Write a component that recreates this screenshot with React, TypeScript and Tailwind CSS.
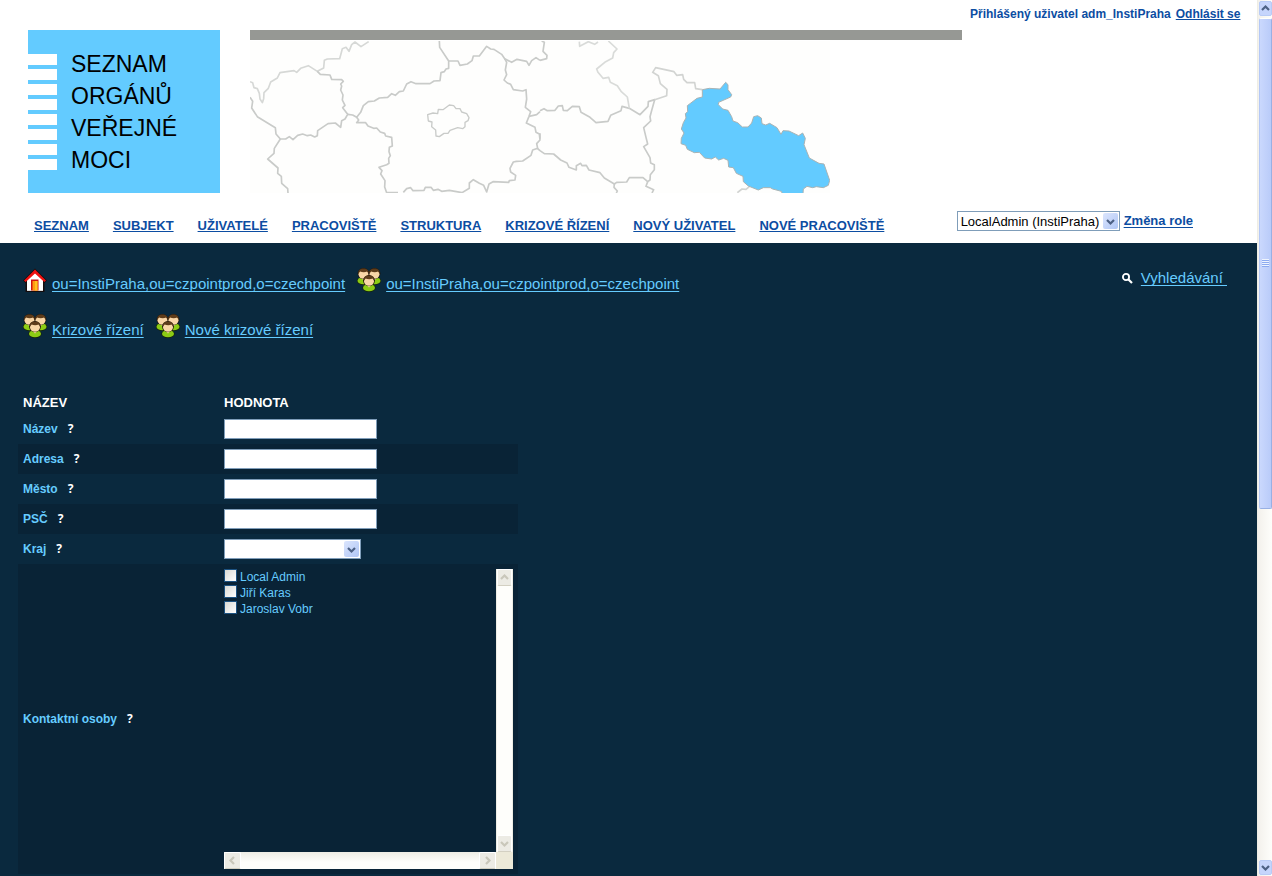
import React, { useState } from 'react';
import { clsx } from 'clsx';

const navItems = [
  'SEZNAM',
  'SUBJEKT',
  'UŽIVATELÉ',
  'PRACOVIŠTĚ',
  'STRUKTURA',
  'KRIZOVÉ ŘÍZENÍ',
  'NOVÝ UŽIVATEL',
  'NOVÉ PRACOVIŠTĚ',
];

const textFields = [
  { id: 'nazev', label: 'Název' },
  { id: 'adresa', label: 'Adresa' },
  { id: 'mesto', label: 'Město' },
  { id: 'psc', label: 'PSČ' },
];

const contacts = ['Local Admin', 'Jiří Karas', 'Jaroslav Vobr'];

export default function App() {
  return (
    <div className="flex h-screen overflow-hidden bg-white font-['Liberation_Sans',Arial,sans-serif]">
      <div className="flex min-w-0 flex-1 flex-col overflow-hidden">
        <Header />
        <main className="flex-1 bg-[#0a293e] px-[18px] pt-[25px] text-[#66ccff]">
          <Breadcrumbs />
          <ContactForm />
        </main>
      </div>
      <PageScrollbar />
    </div>
  );
}

function Header() {
  return (
    <header className="text-[#0c4da2]">
      <div className="flex items-start pl-7">
        <Logo />
        <div className="mt-[30px] ml-[30px] w-[712px] shrink-0">
          <div className="h-[10px] bg-[#969894]" />
          <RegionMap />
        </div>
        <div className="mt-[6px] ml-2 flex gap-[5px] text-xs leading-4 font-bold whitespace-nowrap">
          <span>Přihlášený uživatel adm_InstiPraha</span>
          <a href="#" className="underline underline-offset-1">
            Odhlásit se
          </a>
        </div>
      </div>
      <div className="flex h-[50px] items-start justify-between pt-[18px] pr-16 pl-[34px]">
        <nav className="flex gap-6 pt-[7px] text-[13px] leading-4 font-bold whitespace-nowrap">
          {navItems.map((item) => (
            <a key={item} href="#" className="underline underline-offset-1">
              {item}
            </a>
          ))}
        </nav>
        <div className="flex items-center gap-1">
          <XpSelect label="Role" className="w-[163px] text-[13px]" options={['LocalAdmin (InstiPraha)']} />
          <a href="#" className="text-[13px] leading-5 font-bold whitespace-nowrap underline underline-offset-2">
            Změna role
          </a>
        </div>
      </div>
    </header>
  );
}

function Logo() {
  return (
    <div className="mt-[30px] flex h-[163px] w-48 shrink-0 bg-[#63cbff]">
      {/* white stripes on the left edge */}
      <div className="flex w-[29px] flex-col gap-1 pt-6">
        {[0, 1, 2, 3, 4, 5, 6, 7].map((i) => (
          <div key={i} className="h-[11px] bg-white" />
        ))}
      </div>
      <div className="pt-[18px] pl-[14px] text-[23px] leading-8 text-black">
        SEZNAM
        <br />
        ORGÁNŮ
        <br />
        VEŘEJNÉ
        <br />
        MOCI
      </div>
    </div>
  );
}

function RegionMap() {
  return (
    <svg className="mt-px block h-[152px] w-[580px] bg-[#fefefd]" viewBox="0 0 1740 456" aria-hidden="true">
      <g fill="none" stroke="#c9cbc9" strokeWidth="5" strokeLinejoin="round">
        <g transform="translate(-30 -63)">
          <path
            stroke="#d6d8d6"
            d="M30 185L38 188L42 203L52 206L58 220L60 237L67 248L71 236L72 218L85 205L92 186L112 174L120 158L162 152L170 157L182 145L205 137L232 154L251 144L253 121L262 117L299 116L307 86L318 82L327 94L335 74L345 66L363 80L386 65"
          />
          <path d="M30 232L38 244L35 264L52 290L106 323L108 342L121 357L103 385L102 400L83 417L114 444L113 460L124 469L125 490L143 506L144 519" />
          <path d="M121 357L137 357L148 350L159 359L173 346L188 342L202 347L212 345L224 351L232 347L233 332L264 311L286 309L302 322L305 302L315 297L323 283L308 263L315 256L307 240L309 225L302 210L305 198L302 192L310 184L305 179L275 178L270 165L241 163L232 154" />
          <path d="M323 283L338 285L350 292L362 277L370 257L385 245L403 243L418 234L443 232L455 221L466 226L478 215L490 213L500 192L513 185L528 191L570 191L582 183L600 182L603 158L613 155L618 147L626 145L626 123L599 82L598 63" />
          <path d="M626 123L654 123L660 136L682 132L696 122L700 108L718 108L740 79L752 87L762 88L785 103L794 116L815 127L831 118L860 124L867 136L875 122L888 113L900 121" />
          <path d="M350 292L356 300L350 308L377 308L384 318L401 325L410 324L421 336L434 340L437 348L455 352L457 378L448 382L447 395L451 407L446 415L447 430L440 434L417 442L426 452L422 462L435 482L434 501L440 518L474 518" />
          <path d="M794 116L800 127L796 150L800 164L792 180L802 189L812 193L820 209L848 213L858 209L860 237L856 262L872 275L867 289L859 309L885 322L888 337L898 342L900 360L890 371L893 385L878 390L873 406L848 423L829 424L820 426L810 445L812 456L827 466L825 480L808 482L806 487L759 485L747 492L740 516L731 496L718 490L700 479L688 489L688 505L666 518L628 511L605 514L594 508L580 511L573 502L556 502L552 511L519 512L512 503L500 506L490 517" />
          <path d="M867 289L890 284L900 275" />
          <path
            strokeWidth="4"
            d="M563 284L579 279L593 281L595 268L609 269L628 255L641 257L648 266L660 266L665 276L680 281L687 293L684 302L675 307L675 320L668 326L653 323L630 331L624 340L612 340L598 350L588 348L587 330L575 320L576 306L565 303Z"
          />
        </g>
        <g transform="translate(870 -63)">
          <path d="M5 63L13 67L9 94L21 106L20 116L0 121M0 272L12 266L22 272L45 271L55 258L67 257L70 271L82 272L97 259L118 260L123 277L150 292L168 308L204 304L212 286L243 272L246 259L268 265L300 284L324 259L325 245L344 239L334 275L330 290L332 303L311 323L318 352L323 372L311 380L330 413L332 429L343 434L343 449L331 464L330 480L323 485L309 473L268 473L260 486L230 487L223 492L193 474L180 458L147 450L139 436L126 437L122 430L109 437L109 450L87 442L81 429L62 420L41 402L13 401L0 392L-8 385" />
          <path d="M223 492L222 502L232 513L229 519M323 485L318 499L341 509L336 519M0 340L0 356" />
          <path
            stroke="#d9dbd9"
            d="M118 65L119 79L145 65L164 73L174 66M205 63L231 87L221 98L218 114L197 125L170 147L174 157L189 175L206 172L211 187L232 197L244 215L262 231L268 265"
          />
          <path stroke="#d2d4d2" d="M344 239L380 227L381 208L361 191L355 167L338 157L347 143L402 155L410 166L428 164L431 178L441 188L464 188L467 206L487 209M628 500L618 508L606 507L592 518" />
          <path
            fill="#63cbff"
            stroke="#a9b3b4"
            strokeWidth="3"
            d="M487 209L508 205L540 207L557 187L564 194L564 209L575 224L572 231L536 247L535 254L548 267L564 271L575 290L579 303L593 308L607 321L624 321L635 309L641 290L653 287L664 294L666 311L677 315L689 310L711 323L723 343L729 332L747 333L776 347L788 339L796 355L792 374L808 414L837 430L852 432L869 481L865 496L850 503L829 500L818 503L801 499L790 507L789 521L727 521L724 514L698 507L691 503L670 503L655 510L625 498L610 485L609 469L589 460L580 443L566 441L564 421L551 415L536 420L526 411L515 417L494 414L478 397L463 398L442 388L437 376L423 371L424 355L432 339L424 327L430 308L438 294L436 281L443 275L442 257L471 235L487 231Z"
          />
        </g>
      </g>
    </svg>
  );
}

const crumbClass = 'underline underline-offset-2 [text-decoration-skip-ink:none]';

function Breadcrumbs() {
  return (
    <div className="flex items-start justify-between pr-3 pl-[5px] text-[15px] leading-4 whitespace-nowrap">
      <div className="flex flex-col gap-[22px]">
        <div className="flex items-center gap-3">
          <Crumb icon={<HouseIcon />} text="ou=InstiPraha,ou=czpointprod,o=czechpoint" />
          <Crumb icon={<PeopleIcon />} text="ou=InstiPraha,ou=czpointprod,o=czechpoint" />
        </div>
        <div className="flex items-center gap-3">
          <Crumb icon={<PeopleIcon />} text="Krizové řízení" />
          <Crumb icon={<PeopleIcon />} text="Nové krizové řízení" />
        </div>
      </div>
      <div className="flex items-center gap-2 leading-5">
        <svg className="h-3 w-3" viewBox="0 0 12 12" fill="none" stroke="#fff" aria-hidden="true">
          <circle cx="5" cy="5" r="3.1" strokeWidth="1.8" />
          <path d="M7.5 7.5L11 11" strokeWidth="2.2" />
        </svg>
        <a href="#" className={clsx(crumbClass, 'whitespace-pre')}>
          {'Vyhledávání '}
        </a>
      </div>
    </div>
  );
}

function Crumb({ icon, text }: { icon: React.ReactNode; text: string }) {
  return (
    <div className="flex items-start gap-[5px]">
      {icon}
      <a href="#" className={clsx(crumbClass, 'pt-2')}>
        {text}
      </a>
    </div>
  );
}

function HouseIcon() {
  return (
    <svg className="h-6 w-6" viewBox="0 0 24 24" aria-hidden="true">
      <path d="M12 0.5L24 12.5L21.5 15V24H2.5V15L0 12.5Z" fill="#160c0c" />
      <path d="M4 12L12 4.500L20 12V22.500H4Z" fill="#fff" />
      <path d="M12 1.500L23 12.500L21.300 14L12 5.600L2.700 14L1 12.500Z" fill="#ee1111" />
      <path d="M4 22h16v1H4z" fill="#d8d8d8" />
      <path d="M8 11.500h7.500V22.500H8z" fill="#d01010" />
      <path d="M9.500 13h5V22.500h-5z" fill="#ff9a12" />
      <path d="M12 13h2.500v9.500H12z" fill="#ffc020" />
    </svg>
  );
}

function Person({ x, y }: { x: number; y: number }) {
  return (
    <g transform={`translate(${x} ${y})`}>
      <ellipse cx="6" cy="12.700" rx="6.700" ry="4.300" fill="#16240a" />
      <ellipse cx="6" cy="12.700" rx="6" ry="3.600" fill="#8ccc14" />
      <path d="M4 9.500h4l-2 3.200z" fill="#e8c69a" />
      <ellipse cx="6" cy="5.600" rx="5.900" ry="5.500" fill="#1d1208" />
      <ellipse cx="6" cy="6.300" rx="5" ry="4.500" fill="#f9d6a6" />
      <path d="M0.900 5.600C0.400 2.200 2.700 0.500 6 0.500C9.300 0.500 11.600 2.200 11.100 5.600L9.600 3.600C7.500 4.500 4.500 4.300 2.600 3.600Z" fill="#5e3c1a" />
    </g>
  );
}

function PeopleIcon() {
  return (
    <svg className="h-6 w-6" viewBox="0 0 24 24" aria-hidden="true">
      <Person x={0.5} y={0} />
      <Person x={11.5} y={0} />
      <Person x={6} y={7} />
    </svg>
  );
}

function ContactForm() {
  return (
    <table className="mt-[54px] w-[500px] table-fixed border-collapse text-xs">
      <colgroup>
        <col className="w-[201px]" />
        <col />
      </colgroup>
      <thead>
        <tr className="h-[22px] text-left text-[13px] leading-4 text-white">
          <th className="px-[5px] py-0">NÁZEV</th>
          <th className="px-[5px] py-0">HODNOTA</th>
        </tr>
      </thead>
      <tbody>
        {textFields.map((f, i) => (
          <tr key={f.id} className={clsx('h-[30px]', i % 2 === 1 && 'bg-[#092336]')}>
            <FieldLabel id={f.id} label={f.label} />
            <td className="px-[5px] py-0">
              <input
                id={f.id}
                type="text"
                className="block h-5 w-[153px] border border-[#7f9db9] bg-white px-1 text-black outline-none"
              />
            </td>
          </tr>
        ))}
        <tr className="h-[30px]">
          <FieldLabel id="kraj" label="Kraj" />
          <td className="px-[5px] py-0">
            <XpSelect id="kraj" className="w-[137px]" options={['']} />
          </td>
        </tr>
        <tr className="bg-[#092336]">
          <FieldLabel id="osoby" label="Kontaktní osoby" />
          <td className="p-[5px]">
            <ContactList />
          </td>
        </tr>
      </tbody>
    </table>
  );
}

function FieldLabel({ id, label }: { id: string; label: string }) {
  return (
    <td className="px-[5px] py-0 align-middle">
      <div className="flex items-center gap-[10px] leading-4 font-bold">
        <label htmlFor={id}>{label}</label>
        <button type="button" className="font-['Noto_Sans',sans-serif] text-xs font-bold text-white">
          ?
        </button>
      </div>
    </td>
  );
}

function ContactList() {
  const [checked, setChecked] = useState<string[]>([]);

  const toggle = (name: string) => {
    setChecked(checked.includes(name) ? checked.filter((c) => c !== name) : [...checked, name]);
  };

  return (
    <div id="osoby" className="grid h-[300px] grid-cols-[1fr_17px] grid-rows-[1fr_17px]">
      <div>
        {contacts.map((name) => (
          <label key={name} className="flex h-4 items-start gap-[3px] leading-4">
            <input
              type="checkbox"
              checked={checked.includes(name)}
              onChange={() => toggle(name)}
              className="h-[13px] w-[13px] appearance-none border border-[#1c5180] bg-linear-to-br from-[#d9d9d4] to-white checked:bg-[#21a121]"
            />
            {name}
          </label>
        ))}
      </div>
      <div className="flex flex-col justify-between border-x border-[#eeede5] bg-[#fefefb]">
        <ScrollButton dir="up" />
        <ScrollButton dir="down" />
      </div>
      <div className="flex justify-between bg-linear-to-b from-[#eeede5] to-[#fefefb] to-60%">
        <ScrollButton dir="left" />
        <ScrollButton dir="right" />
      </div>
      <div className="bg-[#ece9d8]" />
    </div>
  );
}

const arrowPaths = {
  up: 'M1 6L4.500 2.500L8 6',
  down: 'M1 3L4.500 6.500L8 3',
  left: 'M6 1L2.500 4.500L6 8',
  right: 'M3 1L6.500 4.500L3 8',
};

function Arrow({ dir, color }: { dir: keyof typeof arrowPaths; color: string }) {
  return (
    <svg className="h-[9px] w-[9px]" viewBox="0 0 9 9" fill="none" stroke={color} strokeWidth="2.200" aria-hidden="true">
      <path d={arrowPaths[dir]} />
    </svg>
  );
}

// disabled scroll button of the contact list
function ScrollButton({ dir }: { dir: keyof typeof arrowPaths }) {
  return (
    <button
      type="button"
      disabled
      aria-label={dir}
      className="flex h-[17px] w-full max-w-[17px] items-center justify-center rounded-[2px] border border-white border-b-[#d3d0c2] bg-[#ecebe4]"
    >
      <Arrow dir={dir} color="#c9c7ba" />
    </button>
  );
}

function XpSelect({
  id,
  label,
  options,
  className,
}: {
  id?: string;
  label?: string;
  options: string[];
  className: string;
}) {
  return (
    <div className={clsx('relative h-5', className)}>
      <select
        id={id}
        aria-label={label}
        className="block h-5 w-full appearance-none border border-[#7f9db9] bg-white pl-[3px] text-black outline-none"
      >
        {options.map((o) => (
          <option key={o}>{o}</option>
        ))}
      </select>
      <span className="pointer-events-none absolute top-[2px] right-[2px] flex h-4 w-[15px] items-center justify-center rounded-[2px] bg-linear-to-br from-[#dbe5fd] to-[#b0c6f5]">
        <Arrow dir="down" color="#4d6185" />
      </span>
    </div>
  );
}

function PageScrollbar() {
  return (
    <div className="flex w-[15px] shrink-0 flex-col border-l border-[#eeede5] bg-linear-to-r from-[#f3f1ec] to-[#fefefb] pl-px">
      <button
        type="button"
        aria-label="Nahoru"
        className="mt-px flex h-[15px] items-center justify-center rounded-[2px] border border-[#b8cbf6] bg-[#c6d5fc]"
      >
        <Arrow dir="up" color="#4d6185" />
      </button>
      <div className="mt-[2px] flex h-[56vh] flex-col items-center justify-center gap-px rounded-[2px] border border-[#98b0e4] border-t-white border-l-[#b4c8f6] bg-linear-to-r from-[#cad8fd] to-[#b9cbf9]">
        {[0, 1, 2, 3].map((i) => (
          <div key={i} className="h-px w-[7px] bg-[#8caaf0] shadow-[0_-1px_0_#eef4fe]" />
        ))}
      </div>
      <button
        type="button"
        aria-label="Dolů"
        className="mt-auto mb-px flex h-[15px] items-center justify-center rounded-[2px] border border-[#b8cbf6] bg-[#c6d5fc]"
      >
        <Arrow dir="down" color="#4d6185" />
      </button>
    </div>
  );
}
